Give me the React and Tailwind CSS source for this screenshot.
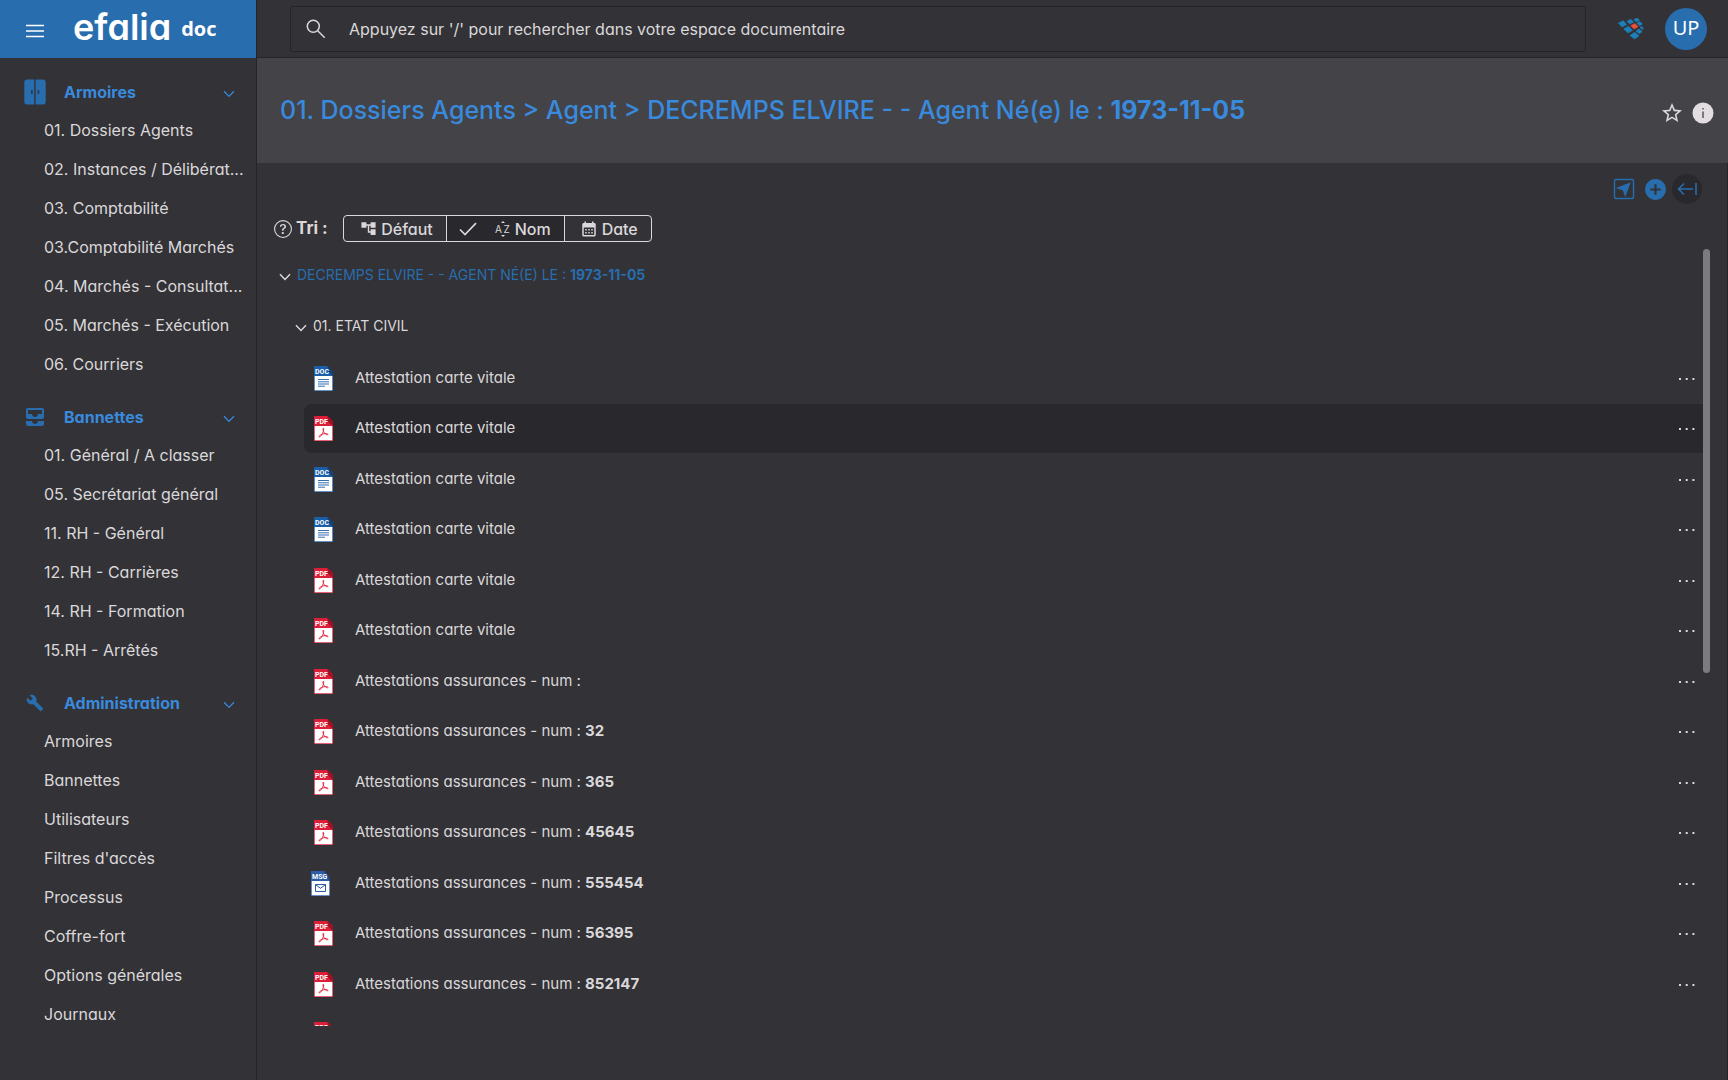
import React from "react";
import {
    MdAccountTree,
    MdAddCircle,
    MdAllInbox,
    MdBuild,
    MdCalendarMonth,
    MdStarBorder,
} from "react-icons/md";
import { BsQuestionCircle } from "react-icons/bs";

const sections = [
    {
        title: "Armoires",
        icon: "cabinet",
        items: [
            "01. Dossiers Agents",
            "02. Instances / Délibérat...",
            "03. Comptabilité",
            "03.Comptabilité Marchés",
            "04. Marchés - Consultat...",
            "05. Marchés - Exécution",
            "06. Courriers",
        ],
    },
    {
        title: "Bannettes",
        icon: "inbox",
        items: [
            "01. Général / A classer",
            "05. Secrétariat général",
            "11. RH - Général",
            "12. RH - Carrières",
            "14. RH - Formation",
            "15.RH - Arrêtés",
        ],
    },
    {
        title: "Administration",
        icon: "build",
        items: [
            "Armoires",
            "Bannettes",
            "Utilisateurs",
            "Filtres d'accès",
            "Processus",
            "Coffre-fort",
            "Options générales",
            "Journaux",
        ],
    },
];

const documents = [
    { type: "doc", name: "Attestation carte vitale" },
    { type: "pdf", name: "Attestation carte vitale", active: true },
    { type: "doc", name: "Attestation carte vitale" },
    { type: "doc", name: "Attestation carte vitale" },
    { type: "pdf", name: "Attestation carte vitale" },
    { type: "pdf", name: "Attestation carte vitale" },
    { type: "pdf", name: "Attestations assurances - num :" },
    { type: "pdf", name: "Attestations assurances - num :", num: "32" },
    { type: "pdf", name: "Attestations assurances - num :", num: "365" },
    { type: "pdf", name: "Attestations assurances - num :", num: "45645" },
    { type: "msg", name: "Attestations assurances - num :", num: "555454" },
    { type: "pdf", name: "Attestations assurances - num :", num: "56395" },
    { type: "pdf", name: "Attestations assurances - num :", num: "852147" },
    { type: "pdf", name: "" },
];

const Chevron = ({ className }) => (
    <svg viewBox="0 0 12 8" fill="none" stroke="currentColor" className={className}>
        <path d="M1 1.2 6 6.4 11 1.2" />
    </svg>
);

const CabinetIcon = () => (
    <svg viewBox="0 0 22 26" className="w-[22px] h-[26px]">
        <path d="M3 .5h7.2v25H3A2.6 2.6 0 0 1 .3 23V3A2.6 2.6 0 0 1 3 .5Z" fill="#286dae" />
        <path d="M11.6.5H19A2.6 2.6 0 0 1 21.7 3v20a2.6 2.6 0 0 1-2.7 2.5h-7.4Z" fill="#286dae" />
        <ellipse cx="7.9" cy="13" rx="1" ry="2.3" fill="#2b3b52" />
        <ellipse cx="14.4" cy="13" rx="1" ry="2.3" fill="#2b3b52" />
    </svg>
);

const SectionIcon = ({ icon }) => {
    if (icon === "cabinet") return <CabinetIcon />;
    if (icon === "inbox") return <MdAllInbox size={24} />;
    return <MdBuild size={18} />;
};

const fileColors = {
    doc: ["#1b5fa8", "#0d4480"],
    pdf: ["#dc1f38", "#a30f24"],
    msg: ["#2f5ca6", "#1f4380"],
};

const FileIcon = ({ type }) => {
    const [main, fold] = fileColors[type];

    return (
        <svg viewBox="0 0 19 25" className="w-[19px] h-[25px]">
            <path d="M0 0h13.5L19 5.5V25H0Z" fill={main} />
            <path d="M13.5 0 19 5.5V10l-5.5-5Z" fill={fold} />
            <path d="M.7 10h17.6v14.3H.7Z" fill="#fff" />
            <text
                x="1"
                y="8"
                fontSize="7"
                fontWeight="700"
                fill="#fff"
                fontFamily="Roboto, sans-serif"
            >
                {type.toUpperCase()}
            </text>
            {type === "doc" && (
                <path d="M4 13.5h11M4 15.8h11M4 18h11M4 20.2h7" stroke={main} strokeWidth=".9" />
            )}
            {type === "pdf" && (
                <path
                    d="M9.3 12.2c.8 0 .5 2.8-.8 5.2-1.2 2.3-2.7 4-3.3 3.5-.8-.7 1.5-2.4 4-3 2.5-.6 4.8-.4 4.8.5 0 1-2.3.2-3.6-1.5-1.3-1.6-1.8-4.7-1.1-4.7Z"
                    fill="none"
                    stroke={main}
                    strokeWidth=".9"
                />
            )}
            {type === "msg" && (
                <path
                    d="M4.5 13.5h10v7h-10ZM4.5 13.7l5 3.6 5-3.6"
                    fill="none"
                    stroke={main}
                    strokeWidth="1"
                />
            )}
        </svg>
    );
};

const BrandMark = () => (
    <svg viewBox="0 0 26 22" className="w-[26px] h-[22px]" fill="#1d80bd">
        <g stroke="#1d80bd" strokeWidth=".6">
            <path d="m.5 5 4.8-2.3 3.4 3.8L4 9Z" />
            <path d="m9 3.3 3.7-2 3 2.6-3.9 2.2Z" />
            <path d="m16 1.5 3-1.5 2.5 2L18.3 4Z" />
            <path d="m5.8 11 4.6-2.7 4.1 4L10 15Z" />
            <path d="m19 5.1 2.8-1.6 2.6 2.4-2.9 1.9Z" />
            <path d="m12 17.5 4.8-3.2 4.2 3.5L16.6 21Z" />
            <path d="m18 13 3-2.1 3.2 2.8-3 2Z" />
            <path d="m22 9.5 1.9-1.2 1.6 2.2-1.4 1Z" />
        </g>
        <path d="m12.8 7.7 4-2.3 3.4 3.2-4 2.5Z" fill="#e8503a" stroke="#e8503a" strokeWidth=".6" />
    </svg>
);

const Sidebar = () => (
    <nav className="flex w-[257px] shrink-0 flex-col border-r border-[#252429] pt-[15px]">
        {sections.map((section) => (
            <div key={section.title} className="mb-3.5">
                <button type="button" className="flex h-[38px] w-full items-center pr-[21px] pl-[23px] text-[#286dae]">
                    <span className="flex w-6 justify-center">
                        <SectionIcon icon={section.icon} />
                    </span>
                    <span className="ml-[17px] flex-1 text-left text-base font-bold text-[#398add]">
                        {section.title}
                    </span>
                    <Chevron className="mt-1 h-2 w-3 stroke-[1.3] text-[#398add]" />
                </button>
                <ul>
                    {section.items.map((item) => (
                        <li key={item}>
                            <a href="#" className="block pl-11 text-base leading-[39px] whitespace-nowrap">
                                {item}
                            </a>
                        </li>
                    ))}
                </ul>
            </div>
        ))}
    </nav>
);

const Header = () => (
    <header className="flex h-[58px] shrink-0">
        <div className="flex w-[256px] shrink-0 items-center bg-[#286dae] pl-[26px] text-white">
            <button type="button" aria-label="Menu">
                <svg viewBox="0 0 18 14" className="mt-1 h-3.5 w-[18px]" stroke="#fff" strokeWidth="1.3">
                    <path d="M0 1.5h18M0 7h18M0 12.5h18" />
                </svg>
            </button>
            <div className="ml-[29px] flex items-center gap-2.5 pb-1">
                <span className="text-4xl font-semibold">efalia</span>
                <span className="pt-1 font-['Open_Sans',sans-serif] text-xl font-bold">doc</span>
            </div>
        </div>
        <div className="flex flex-1 items-center border-b border-l border-[#252429] pr-[21px] pl-[33px]">
            <label className="flex h-[46px] flex-1 items-center rounded-xs border border-[#252429] pl-[15px]">
                <svg viewBox="0 0 20 20" className="size-5" fill="none" stroke="currentColor" strokeWidth="1.5">
                    <circle cx="7.3" cy="7.3" r="6" />
                    <path d="m11.7 11.7 7 7" />
                </svg>
                <input
                    type="text"
                    aria-label="Recherche"
                    placeholder="Appuyez sur '/' pour rechercher dans votre espace documentaire"
                    className="ml-[23px] flex-1 bg-transparent text-base outline-none placeholder:text-[#dad8da]"
                />
            </label>
            <span className="ml-8">
                <BrandMark />
            </span>
            <button
                type="button"
                className="ml-[21px] flex size-[42px] items-center justify-center rounded-full bg-[#286dae] pb-0.5 font-['Noto_Sans',sans-serif] text-xl text-white"
            >
                UP
            </button>
        </div>
    </header>
);

const TitleBar = () => (
    <div className="flex h-[105px] shrink-0 items-center bg-[#444347] pr-3.5 pl-[23px]">
        <h1 className="flex-1 text-[25px] font-medium text-[#398add]">
            01. Dossiers Agents &gt; Agent &gt; DECREMPS ELVIRE - - Agent Né(e) le :{" "}
            <b className="font-bold">1973-11-05</b>
        </h1>
        <button type="button" aria-label="Favori" className="mr-2 pt-1">
            <MdStarBorder size={24} />
        </button>
        <button type="button" aria-label="Informations" className="pt-1">
            <svg viewBox="0 0 22 22" className="size-[22px]">
                <circle cx="11" cy="11" r="10.5" fill="#e2dde0" />
                <path d="M11 9.5v6.5M11 6v1.5" stroke="#444347" strokeWidth="1.3" />
            </svg>
        </button>
    </div>
);

const Actions = () => (
    <div className="flex h-[52px] shrink-0 items-center justify-end gap-1 pr-[25px] text-[#286dae]">
        <button type="button" aria-label="Envoyer" className="mr-1">
            <svg viewBox="0 0 22 22" className="size-[22px]" fill="none" stroke="currentColor" strokeWidth="1.5">
                <rect x="1.5" y="1.5" width="19" height="19" rx="1.5" />
                <path d="m16.5 5.5-4.3 11.500-1.800-5.200L5 10Z" fill="currentColor" />
            </svg>
        </button>
        <button type="button" aria-label="Ajouter">
            <MdAddCircle size={25} />
        </button>
        <button
            type="button"
            aria-label="Replier"
            className="flex size-[30px] items-center justify-center rounded-full bg-[#29282c]"
        >
            <svg viewBox="0 0 20 14" className="h-3.5 w-5" fill="none" stroke="currentColor" strokeWidth="1.6">
                <path d="M7 1.5 1.5 7 7 12.5M1.5 7H16M19 1v12" />
            </svg>
        </button>
    </div>
);

const SortBar = () => (
    <div className="flex shrink-0 items-center pb-[7px] pl-[17px]">
        <BsQuestionCircle size={18} />
        <span className="ml-1 text-[17px] font-bold">Tri :</span>
        <div className="ml-[15px] flex h-[27px] rounded-sm border border-[#dad8da] text-base font-medium">
            <button type="button" className="flex w-[102px] items-center justify-end gap-1 pr-[13px]">
                <MdAccountTree size={17} />
                Défaut
            </button>
            <button
                type="button"
                className="flex w-[119px] items-center justify-end gap-1 border-x border-[#dad8da] bg-[#29282c] pr-[13px]"
            >
                <svg viewBox="0 0 18 14" className="mr-3.5 h-3.5 w-[18px]" fill="none" stroke="currentColor" strokeWidth="1.7">
                    <path d="m1 7.5 5 5L17 1.2" />
                </svg>
                <svg viewBox="0 0 16 16" className="size-4" fill="currentColor">
                    <path d="M8 0 10 2H6ZM8 16l2-2H6Z" />
                    <text x="0" y="11.5" fontSize="10" fontWeight="400">A</text>
                    <text x="8.5" y="11.5" fontSize="10" fontWeight="400">Z</text>
                </svg>
                Nom
            </button>
            <button type="button" className="flex w-[86px] items-center justify-end gap-1 pr-[13px]">
                <MdCalendarMonth size={18} />
                Date
            </button>
        </div>
    </div>
);

const DocumentRow = ({ doc }) => (
    <li
        className={`flex h-[49px] items-center rounded-l-lg pr-[15px] odd:mb-px even:mb-0.5 ${
            doc.active ? "bg-[#29282c]" : ""
        }`}
    >
        <span className={`flex w-[51px] ${doc.type === "msg" ? "pl-[7px]" : "pl-2.5"}`}>
            <FileIcon type={doc.type} />
        </span>
        <a href="#" className="flex-1 text-[15px]">
            {doc.name} {doc.num && <b className="font-bold">{doc.num}</b>}
        </a>
        <button type="button" aria-label="Plus d'actions">
            <svg viewBox="0 0 16 2" className="h-0.5 w-4" fill="currentColor">
                <path d="M0 0h2v2H0ZM6.7 0h2v2h-2ZM13.4 0h2v2h-2Z" />
            </svg>
        </button>
    </li>
);

const DocumentTree = () => (
    <div className="relative mb-[54px] min-h-0 flex-1 overflow-hidden pr-[17px]">
        <button type="button" className="flex h-[52px] items-center gap-1.5 pl-[22px] text-sm uppercase">
            <Chevron className="mt-1 h-2 w-3 stroke-[1.5]" />
            <span className="text-[#286dae]">
                Decremps Elvire - - Agent Né(e) le : <b className="font-bold">1973-11-05</b>
            </span>
        </button>
        <button type="button" className="flex h-[50px] items-center gap-1.5 pl-[38px] text-sm uppercase">
            <Chevron className="mt-1 h-2 w-3 stroke-[1.5]" />
            01. Etat civil
        </button>
        <ul className="pt-[3px] pl-[47px]">
            {documents.map((doc, index) => (
                <DocumentRow key={index} doc={doc} />
            ))}
        </ul>
        <div className="absolute top-0 right-[17px] h-6/11 w-[7px] rounded-full bg-[#7c7b80]" />
    </div>
);

const App = () => {
    return (
        <div className="flex h-screen flex-col overflow-hidden bg-[#333236] font-['Inter',sans-serif] text-[#dad8da] [font-feature-settings:'cv11']">
            <Header />
            <div className="flex min-h-0 flex-1">
                <Sidebar />
                <main className="flex min-w-0 flex-1 flex-col">
                    <TitleBar />
                    <div className="flex min-h-0 flex-1 flex-col border-r border-[#252429]">
                        <Actions />
                        <SortBar />
                        <DocumentTree />
                    </div>
                </main>
            </div>
        </div>
    );
};

export default App;
